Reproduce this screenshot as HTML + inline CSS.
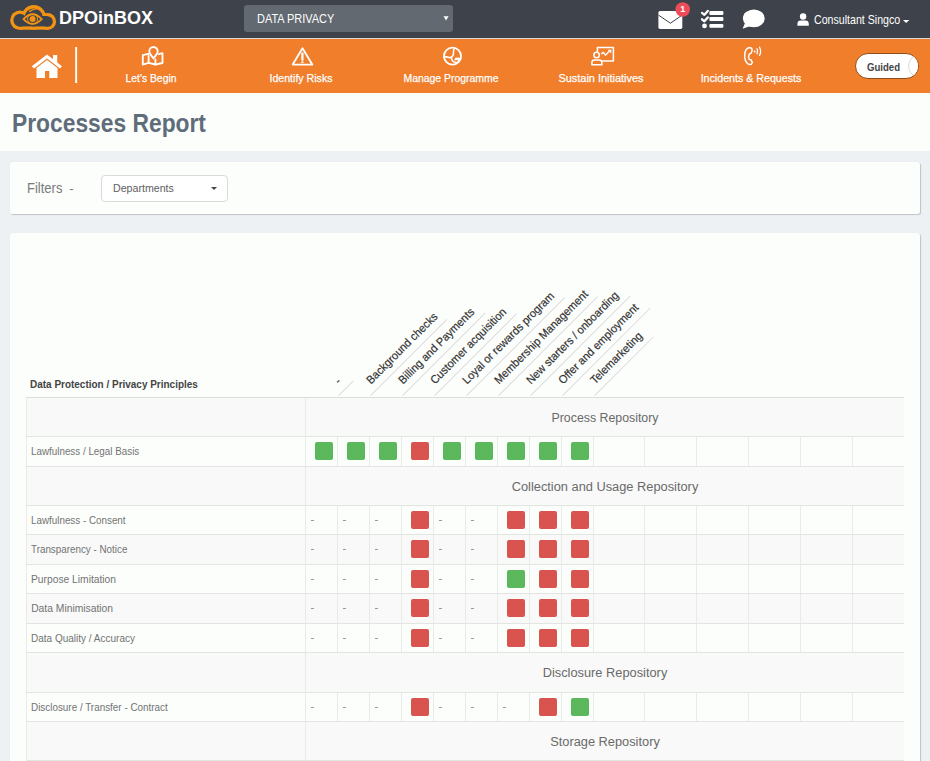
<!DOCTYPE html>
<html><head><meta charset="utf-8">
<style>
*{box-sizing:border-box}
html,body{margin:0;padding:0}
body{width:930px;height:761px;overflow:hidden;position:relative;background:#fcfefc;font-family:"Liberation Sans",sans-serif}
.a{position:absolute}
.nw{white-space:nowrap}
.card{background:#fcfefc;border-radius:2.5px;box-shadow:1px 1px 1px rgba(0,0,0,.19),0 0 1px rgba(0,0,0,.08)}
.hd{position:absolute;transform-origin:0 100%;transform:rotate(-45deg);border-bottom:1px solid #dcdcdc;padding:0 0 0 7.6px;font-size:11.5px;line-height:14px;height:19.1px;color:#333;white-space:nowrap;-webkit-text-stroke:0.2px #333}
.hd span{display:inline-block;transform:scaleX(.95);transform-origin:0 0}
</style></head>
<body>
<div class="a" style="left:0;top:0;width:930px;height:38px;background:#3e424a"></div>
<div class="a" style="left:0;top:38px;width:930px;height:1px;background:#dadada"></div>
<div class="a" style="left:0;top:39px;width:930px;height:54px;background:#f07e2b"></div>
<svg class="a" style="left:0;top:0" width="930" height="93" viewBox="0 0 930 93">
<g fill="#f39313">
<circle cx="20" cy="20.2" r="9.8"/><circle cx="33.7" cy="17.4" r="12.3"/><circle cx="47.6" cy="21.5" r="8.5"/>
<rect x="20" y="18" width="27.3" height="11.7"/>
</g>
<g fill="#3e424a">
<circle cx="20" cy="20.2" r="6.5"/><circle cx="33.7" cy="17.4" r="9"/><circle cx="47.6" cy="21.5" r="5.2"/>
<rect x="20" y="16" width="27.3" height="10.4"/>
</g>
<path d="M29.2 11.6 Q33 8.9 38.3 8.3" stroke="#f39313" stroke-width="1.3" fill="none"/>
<path d="M23.5 19.1 Q32.6 9.4 41.7 19.1 Q32.6 28.8 23.5 19.1 Z" stroke="#f39313" stroke-width="1.8" fill="none"/>
<circle cx="32.6" cy="19" r="5" stroke="#f39313" stroke-width="0.9" fill="none"/>
<circle cx="32.6" cy="19" r="3" fill="#f39313"/>
<!-- dropdown -->
<rect x="244" y="5" width="209" height="27" rx="3" fill="#636970"/>
<path d="M443.5 16.2 L448.6 16.2 L446.05 20.6 Z" fill="#fff"/>
<!-- envelope -->
<rect x="658.4" y="10.9" width="23.9" height="18" rx="1.6" fill="#fff"/>
<path d="M658.6 15.2 L670.4 23.2 L682.1 15.2" stroke="#3e424a" stroke-width="1" fill="none"/>
<circle cx="682.7" cy="9.5" r="7.3" fill="#ee4b58"/>
<!-- tasks -->
<g fill="#fff"><rect x="709.4" y="11" width="14" height="3.9" rx="1"/><rect x="709.4" y="17.1" width="14" height="3.9" rx="1"/><rect x="709.4" y="23.9" width="14" height="3.9" rx="1"/>
<circle cx="704.5" cy="25.9" r="2.4"/></g>
<g stroke="#fff" stroke-width="2.3" fill="none" stroke-linecap="round" stroke-linejoin="round">
<path d="M702 12.9 L704.4 14.8 L707.8 10.9"/><path d="M702 19.3 L704.4 21.3 L707.8 17.4"/></g>
<!-- chat -->
<ellipse cx="753.8" cy="18.4" rx="10.9" ry="8.9" fill="#fff"/>
<path d="M745 23 L742.6 28.7 L750.5 26 Z" fill="#fff"/>
<!-- user -->
<circle cx="803.1" cy="16.5" r="3.2" fill="#fff"/>
<path d="M797.4 25.7 L797.4 24 Q797.4 20.6 800.8 20.6 L805.4 20.6 Q808.8 20.6 808.8 24 L808.8 25.7 Z" fill="#fff"/>
<path d="M903 20 L909.3 20 L906.15 23 Z" fill="#fff"/>
<!-- home -->
<g fill="#fff">
<path d="M31.8 66.3 L47 54.6 L62 66.3 L60 68.6 L47 58.6 L34 68.6 Z"/>
<path d="M36.5 68 L47 60 L57.5 68 L57.5 78 L49.3 78 L49.3 71 L45 71 L45 78 L36.5 78 Z"/>
<rect x="53" y="55" width="4.2" height="8"/>
</g>
<rect x="75.2" y="47" width="1.9" height="36" fill="#fff"/>
<g stroke="#fff" stroke-width="1.85" fill="none" stroke-linejoin="round" stroke-linecap="round">
<!-- map -->
<path d="M148.3 53.8 L142.8 55.2 L142.8 64.6 L148.6 62.9 L155.4 64.5 L162.5 63 L162.5 53.2 L158.8 54.2"/>
<path d="M148.6 55.5 L148.6 62.9 M155.4 59.5 L155.4 64.5"/>
<path d="M153.5 58.4 C151.3 55.6 149.3 53.4 149.3 51.2 A4.2 4.2 0 0 1 157.7 51.2 C157.7 53.4 155.7 55.6 153.5 58.4 Z"/>
<!-- warning -->
<path d="M302.5 48.3 L312.3 64.6 L292.7 64.6 Z"/>
<!-- globe -->
<circle cx="452.5" cy="56.15" r="8.5"/>
<path d="M454.8 48.2 C452.6 50 453.8 52.3 453.4 54.2 C453 56.2 451.2 57.6 449.6 57.6 C448.2 57.6 447.7 56.6 446.3 56.9 L444 57.4" stroke-width="1.6"/>
<path d="M451.3 57.9 C451.8 60.8 453.8 62.4 456.3 62.5 C458 62.6 459.2 61.4 458.6 60.1 C458 59.1 456.3 59.1 455.2 59.6 M455.6 58.6 C457.5 58 459.5 58.2 460.6 59" stroke-width="1.6"/>
<!-- presentation -->
<g stroke-width="1.55">
<path d="M597.4 51.8 L597.4 47.4 L613.4 47.4 L613.4 61 L602.8 61"/>
<circle cx="596.6" cy="54.9" r="2.75"/>
<path d="M591.9 64.7 L591.9 62.6 Q591.9 60 594.6 60 L599.2 60 Q601.9 60 601.9 62.6 L601.9 64.7 Z"/>
<path d="M601.6 53.6 L603.4 52.3 L605.4 55.2 L609 51.4" stroke-width="1.4"/>
</g>
<!-- phone -->
<path d="M749.6 47.6 L751.6 48.2 L752.2 50.2 L751 53.4 L749.4 53.9 C748.4 55.8 748.4 57.6 749.2 59.4 L751 59.8 L752.4 62.4 L751.2 64.4 C748.2 65.4 745 62.2 744.7 57 C744.5 52 746.2 48.2 749.6 47.6 Z" stroke-width="1.5"/>
<path d="M757 48.8 Q758.5 51.3 757 53.8 M759.5 47.2 Q761.8 51.3 759.5 55.4" stroke-width="1.3"/>
</g>
<rect x="301.3" y="52.6" width="2.2" height="8.2" rx="0.6" fill="#fff"/>
<rect x="301.3" y="61.5" width="2.2" height="1.5" fill="#fff"/>
<circle cx="754.7" cy="51.4" r="1" fill="#fff"/>
<path d="M607.6 49.8 L611.3 49.8 L611.3 53.5 Z" fill="#fff"/>
</svg>

<div class="a nw" style="top:6.25px;font-size:18.9px;line-height:24px;color:#fff;font-weight:bold;left:59.3px;transform:scaleX(0.952);transform-origin:0 0;">DPOinBOX</div>

<div class="a nw" style="top:10.63px;font-size:12.9px;line-height:16px;color:#fff;left:257px;transform:scaleX(0.85);transform-origin:0 0;">DATA PRIVACY</div>

<div class="a nw" style="top:3.68px;font-size:9px;line-height:11px;color:#fff;font-weight:bold;left:680.2px;">1</div>

<div class="a nw" style="top:12.52px;font-size:12.35px;line-height:15px;color:#fff;left:813.9px;transform:scaleX(0.86);transform-origin:0 0;">Consultant Singco</div>

<div class="a nw" style="top:70.78px;font-size:11.3px;line-height:14px;color:#fff;left:75.6px;width:150px;text-align:center;transform:scaleX(0.917);transform-origin:50% 0;-webkit-text-stroke:0.25px #fff;">Let's Begin</div>

<div class="a nw" style="top:70.78px;font-size:11.3px;line-height:14px;color:#fff;left:225.7px;width:150px;text-align:center;transform:scaleX(0.937);transform-origin:50% 0;-webkit-text-stroke:0.25px #fff;">Identify Risks</div>

<div class="a nw" style="top:70.78px;font-size:11.3px;line-height:14px;color:#fff;left:375.6px;width:150px;text-align:center;transform:scaleX(0.922);transform-origin:50% 0;-webkit-text-stroke:0.25px #fff;">Manage Programme</div>

<div class="a nw" style="top:70.78px;font-size:11.3px;line-height:14px;color:#fff;left:525.6px;width:150px;text-align:center;transform:scaleX(0.969);transform-origin:50% 0;-webkit-text-stroke:0.25px #fff;">Sustain Initiatives</div>

<div class="a nw" style="top:70.78px;font-size:11.3px;line-height:14px;color:#fff;left:675.6px;width:150px;text-align:center;transform:scaleX(0.943);transform-origin:50% 0;-webkit-text-stroke:0.25px #fff;">Incidents &amp; Requests</div>

<div class="a" style="left:855px;top:53px;width:64px;height:26px;border:1px solid #8f4c1c;border-radius:13px;background:#fff;overflow:hidden"><div class="a" style="left:52px;top:0px;width:24px;height:24px;border:1px solid #d8d8d8;border-radius:50%;background:#fff"></div></div>
<div class="a nw" style="top:59.68px;font-size:11.3px;line-height:14px;color:#444;font-weight:bold;left:866.5px;transform:scaleX(0.848);transform-origin:0 0;">Guided</div>

<div class="a nw" style="top:106.82px;font-size:26.2px;line-height:33px;color:#5f6c7a;font-weight:bold;left:11.8px;transform:scaleX(0.871);transform-origin:0 0;">Processes Report</div>

<div class="a" style="left:0;top:151px;width:930px;height:610px;background:#eef1f4"></div>
<div class="a card" style="left:10px;top:162px;width:910px;height:52px"></div>
<div class="a nw" style="top:179.45px;font-size:14px;line-height:18px;color:#7a7a7a;left:26.8px;transform:scaleX(0.93);transform-origin:0 0;">Filters</div>

<div class="a nw" style="top:180.80px;font-size:13px;line-height:16px;color:#7a7a7a;left:69.2px;">-</div>

<div class="a" style="left:101px;top:175px;width:126.5px;height:27px;border:1px solid #dadada;border-radius:4px;background:#fff"></div>
<div class="a nw" style="top:181.22px;font-size:11.2px;line-height:14px;color:#606060;left:112.5px;transform:scaleX(0.95);transform-origin:0 0;">Departments</div>

<div class="a" style="left:211px;top:187px;width:0;height:0;border-left:3px solid transparent;border-right:3px solid transparent;border-top:3px solid #444"></div>
<div class="a card" style="left:10px;top:233px;width:910px;height:600px"></div>
<div class="a nw" style="top:377.31px;font-size:11.8px;line-height:15px;color:#444;font-weight:bold;left:30.3px;transform:scaleX(0.845);transform-origin:0 0;">Data Protection / Privacy Principles</div>

<div class="a" style="left:26px;top:397px;width:878px;height:2px;background:#dcdcdc"></div>
<div class="a" style="left:26px;top:398px;width:878px;height:38px;background:#f8f9f8"></div>
<div class="a" style="left:26px;top:436px;width:878px;height:1px;background:#e3e5e3"></div>
<div class="a" style="left:26px;top:398px;width:1px;height:38px;background:#e9eae9"></div>
<div class="a" style="left:305px;top:398px;width:1px;height:38px;background:#e9eae9"></div>
<div class="a nw" style="top:409.57px;font-size:12.5px;line-height:16px;color:#6a6a6a;left:405.29999999999995px;width:400px;text-align:center;transform:scaleX(0.987);transform-origin:50% 0;">Process Repository</div>

<div class="a" style="left:26px;top:437px;width:878px;height:29px;background:#fcfefc"></div>
<div class="a" style="left:26px;top:466px;width:878px;height:1px;background:#e3e5e3"></div>
<div class="a" style="left:26px;top:437px;width:1px;height:29px;background:#e9eae9"></div>
<div class="a" style="left:305px;top:437px;width:1px;height:29px;background:#e9eae9"></div>
<div class="a" style="left:337px;top:437px;width:1px;height:29px;background:#e9eae9"></div>
<div class="a" style="left:369px;top:437px;width:1px;height:29px;background:#e9eae9"></div>
<div class="a" style="left:401px;top:437px;width:1px;height:29px;background:#e9eae9"></div>
<div class="a" style="left:433px;top:437px;width:1px;height:29px;background:#e9eae9"></div>
<div class="a" style="left:465px;top:437px;width:1px;height:29px;background:#e9eae9"></div>
<div class="a" style="left:497px;top:437px;width:1px;height:29px;background:#e9eae9"></div>
<div class="a" style="left:529px;top:437px;width:1px;height:29px;background:#e9eae9"></div>
<div class="a" style="left:561px;top:437px;width:1px;height:29px;background:#e9eae9"></div>
<div class="a" style="left:593px;top:437px;width:1px;height:29px;background:#e9eae9"></div>
<div class="a" style="left:644px;top:437px;width:1px;height:29px;background:#e9eae9"></div>
<div class="a" style="left:696px;top:437px;width:1px;height:29px;background:#e9eae9"></div>
<div class="a" style="left:748px;top:437px;width:1px;height:29px;background:#e9eae9"></div>
<div class="a" style="left:800px;top:437px;width:1px;height:29px;background:#e9eae9"></div>
<div class="a" style="left:852px;top:437px;width:1px;height:29px;background:#e9eae9"></div>
<div class="a nw" style="top:445.03px;font-size:10.3px;line-height:13px;color:#737373;left:31.2px;transform:scaleX(0.955);transform-origin:0 0;">Lawfulness / Legal Basis</div>

<div class="a" style="left:315px;top:442.0px;width:18px;height:18px;border-radius:2px;background:#5cb85c"></div>
<div class="a" style="left:347px;top:442.0px;width:18px;height:18px;border-radius:2px;background:#5cb85c"></div>
<div class="a" style="left:379px;top:442.0px;width:18px;height:18px;border-radius:2px;background:#5cb85c"></div>
<div class="a" style="left:411px;top:442.0px;width:18px;height:18px;border-radius:2px;background:#d9534f"></div>
<div class="a" style="left:443px;top:442.0px;width:18px;height:18px;border-radius:2px;background:#5cb85c"></div>
<div class="a" style="left:475px;top:442.0px;width:18px;height:18px;border-radius:2px;background:#5cb85c"></div>
<div class="a" style="left:507px;top:442.0px;width:18px;height:18px;border-radius:2px;background:#5cb85c"></div>
<div class="a" style="left:539px;top:442.0px;width:18px;height:18px;border-radius:2px;background:#5cb85c"></div>
<div class="a" style="left:571px;top:442.0px;width:18px;height:18px;border-radius:2px;background:#5cb85c"></div>
<div class="a" style="left:26px;top:467px;width:878px;height:38px;background:#f8f9f8"></div>
<div class="a" style="left:26px;top:505px;width:878px;height:1px;background:#e3e5e3"></div>
<div class="a" style="left:26px;top:467px;width:1px;height:38px;background:#e9eae9"></div>
<div class="a" style="left:305px;top:467px;width:1px;height:38px;background:#e9eae9"></div>
<div class="a nw" style="top:478.57px;font-size:12.5px;line-height:16px;color:#6a6a6a;left:405.29999999999995px;width:400px;text-align:center;transform:scaleX(1.025);transform-origin:50% 0;">Collection and Usage Repository</div>

<div class="a" style="left:26px;top:506px;width:878px;height:28px;background:#fcfefc"></div>
<div class="a" style="left:26px;top:534px;width:878px;height:1px;background:#e3e5e3"></div>
<div class="a" style="left:26px;top:506px;width:1px;height:28px;background:#e9eae9"></div>
<div class="a" style="left:305px;top:506px;width:1px;height:28px;background:#e9eae9"></div>
<div class="a" style="left:337px;top:506px;width:1px;height:28px;background:#e9eae9"></div>
<div class="a" style="left:369px;top:506px;width:1px;height:28px;background:#e9eae9"></div>
<div class="a" style="left:401px;top:506px;width:1px;height:28px;background:#e9eae9"></div>
<div class="a" style="left:433px;top:506px;width:1px;height:28px;background:#e9eae9"></div>
<div class="a" style="left:465px;top:506px;width:1px;height:28px;background:#e9eae9"></div>
<div class="a" style="left:497px;top:506px;width:1px;height:28px;background:#e9eae9"></div>
<div class="a" style="left:529px;top:506px;width:1px;height:28px;background:#e9eae9"></div>
<div class="a" style="left:561px;top:506px;width:1px;height:28px;background:#e9eae9"></div>
<div class="a" style="left:593px;top:506px;width:1px;height:28px;background:#e9eae9"></div>
<div class="a" style="left:644px;top:506px;width:1px;height:28px;background:#e9eae9"></div>
<div class="a" style="left:696px;top:506px;width:1px;height:28px;background:#e9eae9"></div>
<div class="a" style="left:748px;top:506px;width:1px;height:28px;background:#e9eae9"></div>
<div class="a" style="left:800px;top:506px;width:1px;height:28px;background:#e9eae9"></div>
<div class="a" style="left:852px;top:506px;width:1px;height:28px;background:#e9eae9"></div>
<div class="a nw" style="top:513.53px;font-size:10.3px;line-height:13px;color:#737373;left:31.2px;transform:scaleX(0.955);transform-origin:0 0;">Lawfulness - Consent</div>

<div class="a" style="left:310.5px;top:519.5px;width:3px;height:1px;background:#9a9a9a"></div>
<div class="a" style="left:342.5px;top:519.5px;width:3px;height:1px;background:#9a9a9a"></div>
<div class="a" style="left:374.5px;top:519.5px;width:3px;height:1px;background:#9a9a9a"></div>
<div class="a" style="left:411px;top:510.5px;width:18px;height:18px;border-radius:2px;background:#d9534f"></div>
<div class="a" style="left:438.5px;top:519.5px;width:3px;height:1px;background:#9a9a9a"></div>
<div class="a" style="left:470.5px;top:519.5px;width:3px;height:1px;background:#9a9a9a"></div>
<div class="a" style="left:507px;top:510.5px;width:18px;height:18px;border-radius:2px;background:#d9534f"></div>
<div class="a" style="left:539px;top:510.5px;width:18px;height:18px;border-radius:2px;background:#d9534f"></div>
<div class="a" style="left:571px;top:510.5px;width:18px;height:18px;border-radius:2px;background:#d9534f"></div>
<div class="a" style="left:26px;top:535px;width:878px;height:29px;background:#f8f9f8"></div>
<div class="a" style="left:26px;top:564px;width:878px;height:1px;background:#e3e5e3"></div>
<div class="a" style="left:26px;top:535px;width:1px;height:29px;background:#e9eae9"></div>
<div class="a" style="left:305px;top:535px;width:1px;height:29px;background:#e9eae9"></div>
<div class="a" style="left:337px;top:535px;width:1px;height:29px;background:#e9eae9"></div>
<div class="a" style="left:369px;top:535px;width:1px;height:29px;background:#e9eae9"></div>
<div class="a" style="left:401px;top:535px;width:1px;height:29px;background:#e9eae9"></div>
<div class="a" style="left:433px;top:535px;width:1px;height:29px;background:#e9eae9"></div>
<div class="a" style="left:465px;top:535px;width:1px;height:29px;background:#e9eae9"></div>
<div class="a" style="left:497px;top:535px;width:1px;height:29px;background:#e9eae9"></div>
<div class="a" style="left:529px;top:535px;width:1px;height:29px;background:#e9eae9"></div>
<div class="a" style="left:561px;top:535px;width:1px;height:29px;background:#e9eae9"></div>
<div class="a" style="left:593px;top:535px;width:1px;height:29px;background:#e9eae9"></div>
<div class="a" style="left:644px;top:535px;width:1px;height:29px;background:#e9eae9"></div>
<div class="a" style="left:696px;top:535px;width:1px;height:29px;background:#e9eae9"></div>
<div class="a" style="left:748px;top:535px;width:1px;height:29px;background:#e9eae9"></div>
<div class="a" style="left:800px;top:535px;width:1px;height:29px;background:#e9eae9"></div>
<div class="a" style="left:852px;top:535px;width:1px;height:29px;background:#e9eae9"></div>
<div class="a nw" style="top:543.03px;font-size:10.3px;line-height:13px;color:#737373;left:31.2px;transform:scaleX(0.955);transform-origin:0 0;">Transparency - Notice</div>

<div class="a" style="left:310.5px;top:549.0px;width:3px;height:1px;background:#9a9a9a"></div>
<div class="a" style="left:342.5px;top:549.0px;width:3px;height:1px;background:#9a9a9a"></div>
<div class="a" style="left:374.5px;top:549.0px;width:3px;height:1px;background:#9a9a9a"></div>
<div class="a" style="left:411px;top:540.0px;width:18px;height:18px;border-radius:2px;background:#d9534f"></div>
<div class="a" style="left:438.5px;top:549.0px;width:3px;height:1px;background:#9a9a9a"></div>
<div class="a" style="left:470.5px;top:549.0px;width:3px;height:1px;background:#9a9a9a"></div>
<div class="a" style="left:507px;top:540.0px;width:18px;height:18px;border-radius:2px;background:#d9534f"></div>
<div class="a" style="left:539px;top:540.0px;width:18px;height:18px;border-radius:2px;background:#d9534f"></div>
<div class="a" style="left:571px;top:540.0px;width:18px;height:18px;border-radius:2px;background:#d9534f"></div>
<div class="a" style="left:26px;top:565px;width:878px;height:28px;background:#fcfefc"></div>
<div class="a" style="left:26px;top:593px;width:878px;height:1px;background:#e3e5e3"></div>
<div class="a" style="left:26px;top:565px;width:1px;height:28px;background:#e9eae9"></div>
<div class="a" style="left:305px;top:565px;width:1px;height:28px;background:#e9eae9"></div>
<div class="a" style="left:337px;top:565px;width:1px;height:28px;background:#e9eae9"></div>
<div class="a" style="left:369px;top:565px;width:1px;height:28px;background:#e9eae9"></div>
<div class="a" style="left:401px;top:565px;width:1px;height:28px;background:#e9eae9"></div>
<div class="a" style="left:433px;top:565px;width:1px;height:28px;background:#e9eae9"></div>
<div class="a" style="left:465px;top:565px;width:1px;height:28px;background:#e9eae9"></div>
<div class="a" style="left:497px;top:565px;width:1px;height:28px;background:#e9eae9"></div>
<div class="a" style="left:529px;top:565px;width:1px;height:28px;background:#e9eae9"></div>
<div class="a" style="left:561px;top:565px;width:1px;height:28px;background:#e9eae9"></div>
<div class="a" style="left:593px;top:565px;width:1px;height:28px;background:#e9eae9"></div>
<div class="a" style="left:644px;top:565px;width:1px;height:28px;background:#e9eae9"></div>
<div class="a" style="left:696px;top:565px;width:1px;height:28px;background:#e9eae9"></div>
<div class="a" style="left:748px;top:565px;width:1px;height:28px;background:#e9eae9"></div>
<div class="a" style="left:800px;top:565px;width:1px;height:28px;background:#e9eae9"></div>
<div class="a" style="left:852px;top:565px;width:1px;height:28px;background:#e9eae9"></div>
<div class="a nw" style="top:572.53px;font-size:10.3px;line-height:13px;color:#737373;left:31.2px;transform:scaleX(0.997);transform-origin:0 0;">Purpose Limitation</div>

<div class="a" style="left:310.5px;top:578.5px;width:3px;height:1px;background:#9a9a9a"></div>
<div class="a" style="left:342.5px;top:578.5px;width:3px;height:1px;background:#9a9a9a"></div>
<div class="a" style="left:374.5px;top:578.5px;width:3px;height:1px;background:#9a9a9a"></div>
<div class="a" style="left:411px;top:569.5px;width:18px;height:18px;border-radius:2px;background:#d9534f"></div>
<div class="a" style="left:438.5px;top:578.5px;width:3px;height:1px;background:#9a9a9a"></div>
<div class="a" style="left:470.5px;top:578.5px;width:3px;height:1px;background:#9a9a9a"></div>
<div class="a" style="left:507px;top:569.5px;width:18px;height:18px;border-radius:2px;background:#5cb85c"></div>
<div class="a" style="left:539px;top:569.5px;width:18px;height:18px;border-radius:2px;background:#d9534f"></div>
<div class="a" style="left:571px;top:569.5px;width:18px;height:18px;border-radius:2px;background:#d9534f"></div>
<div class="a" style="left:26px;top:594px;width:878px;height:29px;background:#f8f9f8"></div>
<div class="a" style="left:26px;top:623px;width:878px;height:1px;background:#e3e5e3"></div>
<div class="a" style="left:26px;top:594px;width:1px;height:29px;background:#e9eae9"></div>
<div class="a" style="left:305px;top:594px;width:1px;height:29px;background:#e9eae9"></div>
<div class="a" style="left:337px;top:594px;width:1px;height:29px;background:#e9eae9"></div>
<div class="a" style="left:369px;top:594px;width:1px;height:29px;background:#e9eae9"></div>
<div class="a" style="left:401px;top:594px;width:1px;height:29px;background:#e9eae9"></div>
<div class="a" style="left:433px;top:594px;width:1px;height:29px;background:#e9eae9"></div>
<div class="a" style="left:465px;top:594px;width:1px;height:29px;background:#e9eae9"></div>
<div class="a" style="left:497px;top:594px;width:1px;height:29px;background:#e9eae9"></div>
<div class="a" style="left:529px;top:594px;width:1px;height:29px;background:#e9eae9"></div>
<div class="a" style="left:561px;top:594px;width:1px;height:29px;background:#e9eae9"></div>
<div class="a" style="left:593px;top:594px;width:1px;height:29px;background:#e9eae9"></div>
<div class="a" style="left:644px;top:594px;width:1px;height:29px;background:#e9eae9"></div>
<div class="a" style="left:696px;top:594px;width:1px;height:29px;background:#e9eae9"></div>
<div class="a" style="left:748px;top:594px;width:1px;height:29px;background:#e9eae9"></div>
<div class="a" style="left:800px;top:594px;width:1px;height:29px;background:#e9eae9"></div>
<div class="a" style="left:852px;top:594px;width:1px;height:29px;background:#e9eae9"></div>
<div class="a nw" style="top:602.03px;font-size:10.3px;line-height:13px;color:#737373;left:31.2px;transform:scaleX(1.0);transform-origin:0 0;">Data Minimisation</div>

<div class="a" style="left:310.5px;top:608.0px;width:3px;height:1px;background:#9a9a9a"></div>
<div class="a" style="left:342.5px;top:608.0px;width:3px;height:1px;background:#9a9a9a"></div>
<div class="a" style="left:374.5px;top:608.0px;width:3px;height:1px;background:#9a9a9a"></div>
<div class="a" style="left:411px;top:599.0px;width:18px;height:18px;border-radius:2px;background:#d9534f"></div>
<div class="a" style="left:438.5px;top:608.0px;width:3px;height:1px;background:#9a9a9a"></div>
<div class="a" style="left:470.5px;top:608.0px;width:3px;height:1px;background:#9a9a9a"></div>
<div class="a" style="left:507px;top:599.0px;width:18px;height:18px;border-radius:2px;background:#d9534f"></div>
<div class="a" style="left:539px;top:599.0px;width:18px;height:18px;border-radius:2px;background:#d9534f"></div>
<div class="a" style="left:571px;top:599.0px;width:18px;height:18px;border-radius:2px;background:#d9534f"></div>
<div class="a" style="left:26px;top:624px;width:878px;height:28px;background:#fcfefc"></div>
<div class="a" style="left:26px;top:652px;width:878px;height:1px;background:#e3e5e3"></div>
<div class="a" style="left:26px;top:624px;width:1px;height:28px;background:#e9eae9"></div>
<div class="a" style="left:305px;top:624px;width:1px;height:28px;background:#e9eae9"></div>
<div class="a" style="left:337px;top:624px;width:1px;height:28px;background:#e9eae9"></div>
<div class="a" style="left:369px;top:624px;width:1px;height:28px;background:#e9eae9"></div>
<div class="a" style="left:401px;top:624px;width:1px;height:28px;background:#e9eae9"></div>
<div class="a" style="left:433px;top:624px;width:1px;height:28px;background:#e9eae9"></div>
<div class="a" style="left:465px;top:624px;width:1px;height:28px;background:#e9eae9"></div>
<div class="a" style="left:497px;top:624px;width:1px;height:28px;background:#e9eae9"></div>
<div class="a" style="left:529px;top:624px;width:1px;height:28px;background:#e9eae9"></div>
<div class="a" style="left:561px;top:624px;width:1px;height:28px;background:#e9eae9"></div>
<div class="a" style="left:593px;top:624px;width:1px;height:28px;background:#e9eae9"></div>
<div class="a" style="left:644px;top:624px;width:1px;height:28px;background:#e9eae9"></div>
<div class="a" style="left:696px;top:624px;width:1px;height:28px;background:#e9eae9"></div>
<div class="a" style="left:748px;top:624px;width:1px;height:28px;background:#e9eae9"></div>
<div class="a" style="left:800px;top:624px;width:1px;height:28px;background:#e9eae9"></div>
<div class="a" style="left:852px;top:624px;width:1px;height:28px;background:#e9eae9"></div>
<div class="a nw" style="top:631.53px;font-size:10.3px;line-height:13px;color:#737373;left:31.2px;transform:scaleX(0.972);transform-origin:0 0;">Data Quality / Accuracy</div>

<div class="a" style="left:310.5px;top:637.5px;width:3px;height:1px;background:#9a9a9a"></div>
<div class="a" style="left:342.5px;top:637.5px;width:3px;height:1px;background:#9a9a9a"></div>
<div class="a" style="left:374.5px;top:637.5px;width:3px;height:1px;background:#9a9a9a"></div>
<div class="a" style="left:411px;top:628.5px;width:18px;height:18px;border-radius:2px;background:#d9534f"></div>
<div class="a" style="left:438.5px;top:637.5px;width:3px;height:1px;background:#9a9a9a"></div>
<div class="a" style="left:470.5px;top:637.5px;width:3px;height:1px;background:#9a9a9a"></div>
<div class="a" style="left:507px;top:628.5px;width:18px;height:18px;border-radius:2px;background:#d9534f"></div>
<div class="a" style="left:539px;top:628.5px;width:18px;height:18px;border-radius:2px;background:#d9534f"></div>
<div class="a" style="left:571px;top:628.5px;width:18px;height:18px;border-radius:2px;background:#d9534f"></div>
<div class="a" style="left:26px;top:653px;width:878px;height:39px;background:#f8f9f8"></div>
<div class="a" style="left:26px;top:692px;width:878px;height:1px;background:#e3e5e3"></div>
<div class="a" style="left:26px;top:653px;width:1px;height:39px;background:#e9eae9"></div>
<div class="a" style="left:305px;top:653px;width:1px;height:39px;background:#e9eae9"></div>
<div class="a nw" style="top:665.07px;font-size:12.5px;line-height:16px;color:#6a6a6a;left:405.29999999999995px;width:400px;text-align:center;transform:scaleX(1.025);transform-origin:50% 0;">Disclosure Repository</div>

<div class="a" style="left:26px;top:693px;width:878px;height:28px;background:#fcfefc"></div>
<div class="a" style="left:26px;top:721px;width:878px;height:1px;background:#e3e5e3"></div>
<div class="a" style="left:26px;top:693px;width:1px;height:28px;background:#e9eae9"></div>
<div class="a" style="left:305px;top:693px;width:1px;height:28px;background:#e9eae9"></div>
<div class="a" style="left:337px;top:693px;width:1px;height:28px;background:#e9eae9"></div>
<div class="a" style="left:369px;top:693px;width:1px;height:28px;background:#e9eae9"></div>
<div class="a" style="left:401px;top:693px;width:1px;height:28px;background:#e9eae9"></div>
<div class="a" style="left:433px;top:693px;width:1px;height:28px;background:#e9eae9"></div>
<div class="a" style="left:465px;top:693px;width:1px;height:28px;background:#e9eae9"></div>
<div class="a" style="left:497px;top:693px;width:1px;height:28px;background:#e9eae9"></div>
<div class="a" style="left:529px;top:693px;width:1px;height:28px;background:#e9eae9"></div>
<div class="a" style="left:561px;top:693px;width:1px;height:28px;background:#e9eae9"></div>
<div class="a" style="left:593px;top:693px;width:1px;height:28px;background:#e9eae9"></div>
<div class="a" style="left:644px;top:693px;width:1px;height:28px;background:#e9eae9"></div>
<div class="a" style="left:696px;top:693px;width:1px;height:28px;background:#e9eae9"></div>
<div class="a" style="left:748px;top:693px;width:1px;height:28px;background:#e9eae9"></div>
<div class="a" style="left:800px;top:693px;width:1px;height:28px;background:#e9eae9"></div>
<div class="a" style="left:852px;top:693px;width:1px;height:28px;background:#e9eae9"></div>
<div class="a nw" style="top:700.53px;font-size:10.3px;line-height:13px;color:#737373;left:31.2px;transform:scaleX(0.96);transform-origin:0 0;">Disclosure / Transfer - Contract</div>

<div class="a" style="left:310.5px;top:706.5px;width:3px;height:1px;background:#9a9a9a"></div>
<div class="a" style="left:342.5px;top:706.5px;width:3px;height:1px;background:#9a9a9a"></div>
<div class="a" style="left:374.5px;top:706.5px;width:3px;height:1px;background:#9a9a9a"></div>
<div class="a" style="left:411px;top:697.5px;width:18px;height:18px;border-radius:2px;background:#d9534f"></div>
<div class="a" style="left:438.5px;top:706.5px;width:3px;height:1px;background:#9a9a9a"></div>
<div class="a" style="left:470.5px;top:706.5px;width:3px;height:1px;background:#9a9a9a"></div>
<div class="a" style="left:502.5px;top:706.5px;width:3px;height:1px;background:#9a9a9a"></div>
<div class="a" style="left:539px;top:697.5px;width:18px;height:18px;border-radius:2px;background:#d9534f"></div>
<div class="a" style="left:571px;top:697.5px;width:18px;height:18px;border-radius:2px;background:#5cb85c"></div>
<div class="a" style="left:26px;top:722px;width:878px;height:38px;background:#f8f9f8"></div>
<div class="a" style="left:26px;top:760px;width:878px;height:1px;background:#e3e5e3"></div>
<div class="a" style="left:26px;top:722px;width:1px;height:38px;background:#e9eae9"></div>
<div class="a" style="left:305px;top:722px;width:1px;height:38px;background:#e9eae9"></div>
<div class="a nw" style="top:733.57px;font-size:12.5px;line-height:16px;color:#6a6a6a;left:405.29999999999995px;width:400px;text-align:center;transform:scaleX(1.025);transform-origin:50% 0;">Storage Repository</div>

<div class="hd" style="left:339.2px;top:376.90px;width:20.5px"><span>-</span></div>
<div class="hd" style="left:371.2px;top:376.90px;width:107.5px"><span>Background checks</span></div>
<div class="hd" style="left:403.2px;top:376.90px;width:116.7px"><span>Billing and Payments</span></div>
<div class="hd" style="left:435.2px;top:376.90px;width:116px"><span>Customer acquisition</span></div>
<div class="hd" style="left:467.2px;top:376.90px;width:138.6px"><span>Loyal or rewards program</span></div>
<div class="hd" style="left:499.2px;top:376.90px;width:140px"><span>Membership Management</span></div>
<div class="hd" style="left:531.2px;top:376.90px;width:141.4px"><span>New starters / onboarding</span></div>
<div class="hd" style="left:563.2px;top:376.90px;width:124px"><span>Offer and employment</span></div>
<div class="hd" style="left:595.2px;top:376.90px;width:82.9px"><span>Telemarketing</span></div>
</body></html>
